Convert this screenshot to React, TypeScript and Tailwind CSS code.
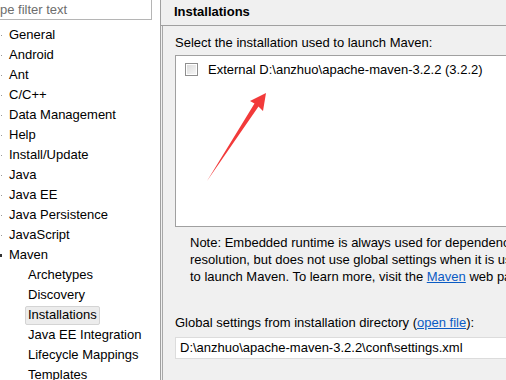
import React from "react";

const tree: { label: string; child?: boolean; selected?: boolean; expanded?: boolean }[] = [
  { label: "General" },
  { label: "Android" },
  { label: "Ant" },
  { label: "C/C++" },
  { label: "Data Management" },
  { label: "Help" },
  { label: "Install/Update" },
  { label: "Java" },
  { label: "Java EE" },
  { label: "Java Persistence" },
  { label: "JavaScript" },
  { label: "Maven", expanded: true },
  { label: "Archetypes", child: true },
  { label: "Discovery", child: true },
  { label: "Installations", child: true, selected: true },
  { label: "Java EE Integration", child: true },
  { label: "Lifecycle Mappings", child: true },
  { label: "Templates", child: true },
];

export default function App() {
  return (
    <div
      className="relative w-[506px] h-[380px] overflow-hidden flex bg-[#f0f0f0] text-[13px] text-black"
      style={{ fontFamily: '"Liberation Sans", Arial, sans-serif' }}
    >
      {/* Left tree panel */}
      <div className="w-[161px] shrink-0 bg-white border-r border-[#a0a0a0] flex flex-col">
        <div className="w-[152px] h-[20px] shrink-0 border-r border-b border-[#b5b5b5] flex items-center text-[#6d6d6d] leading-none">
          pe filter text
        </div>
        <div className="mt-[5px] flex flex-col">
          {tree.map((t) => (
            <div key={t.label} className="h-[20px] shrink-0 flex items-center relative">
              {!t.child && (
                <span
                  className={
                    t.expanded
                      ? "absolute left-0 top-[9px] w-[2px] h-[3px] bg-[#333]"
                      : "absolute left-[1px] top-[10px] w-[1px] h-[1px] bg-[#9a9a9a]"
                  }
                />
              )}
              {t.selected ? (
                <span className="ml-[25px] h-[19px] px-[2px] flex items-center bg-[#ececec] border border-[#d4d4d4] rounded-[2px]">
                  {t.label}
                </span>
              ) : (
                <span className={t.child ? "ml-[28px]" : "ml-[9px]"}>{t.label}</span>
              )}
            </div>
          ))}
        </div>
      </div>

      {/* Right content */}
      <div className="flex-1 flex flex-col min-w-0">
        <div className="h-[26px] shrink-0 border-b border-[#a0a0a0] flex items-center pl-[13px] pb-[2px] font-bold">
          Installations
        </div>
        <div className="flex-1 ml-[1px] border-l border-[#a8a8a8] pl-[12px] flex flex-col">
          <div className="mt-[8px] leading-[17px]">Select the installation used to launch Maven:</div>
          <div className="mt-[4px] w-[400px] h-[172px] shrink-0 bg-white border border-[#a0a0a0] relative">
            <div className="flex items-center mt-[5px] ml-[9px]">
              <span className="w-[13px] h-[13px] border border-[#8f8f8f] bg-white flex items-center justify-center">
                <span className="w-[9px] h-[9px] bg-gradient-to-br from-[#dcdcdc] to-[#f6f6f6]" />
              </span>
              <span className="ml-[10px] leading-[17px]">External D:\anzhuo\apache-maven-3.2.2 (3.2.2)</span>
            </div>
          </div>
          <div className="mt-[7px] pl-[15px] leading-[17px] whitespace-nowrap">
            <div>Note: Embedded runtime is always used for dependency</div>
            <div>resolution, but does not use global settings when it is used</div>
            <div>
              to launch Maven. To learn more, visit the{" "}
              <span className="text-[#0a5bc4] underline">Maven</span> web page.
            </div>
          </div>
          <div className="mt-[29px] leading-[17px] whitespace-nowrap">
            Global settings from installation directory (
            <span className="text-[#0a5bc4] underline">open file</span>):
          </div>
          <div className="mt-[6px] w-[400px] h-[22px] shrink-0 bg-white border border-[#dcdcdc] flex items-center pl-[4px] whitespace-nowrap">
            D:\anzhuo\apache-maven-3.2.2\conf\settings.xml
          </div>
        </div>
      </div>

      {/* Red annotation arrow */}
      <svg className="absolute left-0 top-0 pointer-events-none" width="506" height="380">
        <polygon
          points="266,93 263,111 258.5,106.5 207,181 254.5,103.5 250,101"
          fill="#f23a3a"
        />
      </svg>
    </div>
  );
}
